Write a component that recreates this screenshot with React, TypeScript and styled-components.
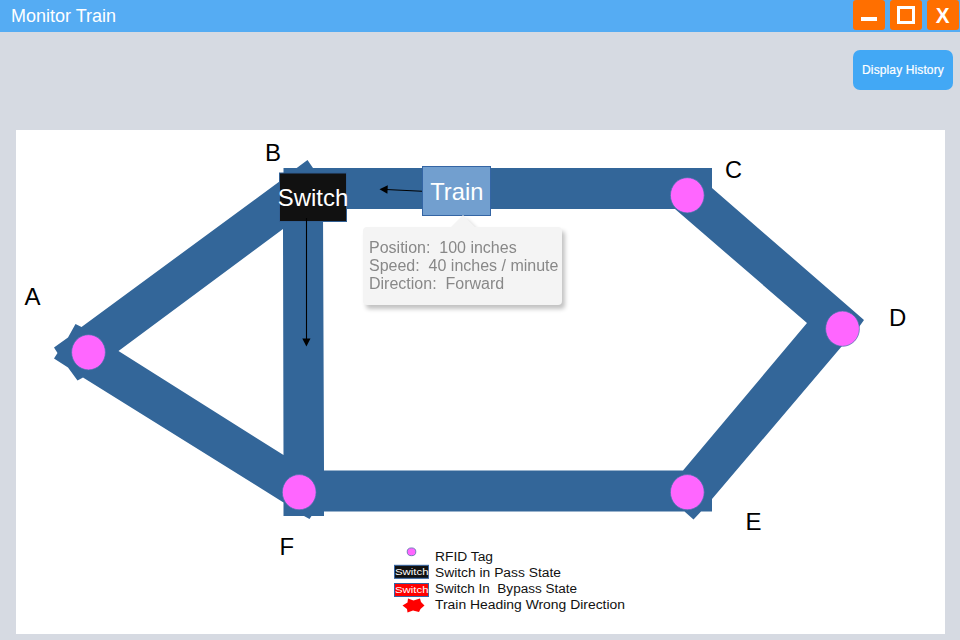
import React from "react";
import styled, { createGlobalStyle } from "styled-components";

const GlobalStyle = createGlobalStyle`
  * { box-sizing: border-box; }
  body { margin: 0; background: #d6dae2; font-family: "Liberation Sans", Arial, sans-serif; }
`;

const Window = styled.div`
  width: 960px;
  height: 640px;
  overflow: hidden;
  display: flex;
  flex-direction: column;
  background: #d6dae2;
`;

const TitleBar = styled.header`
  height: 32px;
  flex: none;
  display: flex;
  justify-content: space-between;
  background: #55acf3;
  padding: 0 1px 0 11px;
`;

const Title = styled.h1`
  margin: 0;
  font-size: 18px;
  font-weight: 400;
  line-height: 32px;
  color: #fff;
`;

const Controls = styled.div`
  display: flex;
  gap: 5px;
`;

const ControlButton = styled.button`
  width: 32px;
  height: 30px;
  padding: 0;
  border: 0;
  border-radius: 3px;
  background: #ff6f00;
  svg { display: block; }
`;

const Toolbar = styled.div`
  height: 98px;
  flex: none;
  display: flex;
  justify-content: flex-end;
  align-items: flex-start;
  padding: 18px 7px 0 0;
`;

const HistoryButton = styled.button`
  width: 100px;
  height: 40px;
  padding: 0;
  border: 0;
  border-radius: 7px;
  background: #42a8f5;
  color: #fff;
  font: 12px "Liberation Sans", Arial, sans-serif;
  letter-spacing: 0.12px;
  -webkit-text-stroke: 0.2px #fff;
  white-space: nowrap;
`;

const Panel = styled.main`
  position: relative;
  width: 929px;
  height: 504px;
  margin-left: 16px;
  background: #fff;
`;

const Track = styled.svg`
  display: block;
  font-family: "Liberation Sans", Arial, sans-serif;
`;

const Tooltip = styled.div`
  position: absolute;
  left: 347px;
  top: 97px;
  width: 199px;
  height: 78px;
  padding: 12px 6px;
  border-radius: 4px;
  background: #f4f4f4;
  filter: drop-shadow(3px 4px 2px rgba(0, 0, 0, 0.24));
  color: #888;
  font-size: 16px;
  line-height: 18px;
  white-space: pre;

  &::before {
    content: "";
    position: absolute;
    left: 88px;
    top: -12px;
    border: solid transparent;
    border-width: 0 12px 12px;
    border-bottom-color: #f4f4f4;
  }
`;

const nodes = [
  { label: "A", lx: 24.5, ly: 304.5, width: 16, x: 88.5, y: 352.3 },
  { label: "B", lx: 265, ly: 160.5, width: 16 },
  { label: "C", lx: 725, ly: 177.5, width: 17, x: 687.3, y: 195.3 },
  { label: "D", lx: 889, ly: 325.5, width: 17.3, x: 842.5, y: 328.7 },
  { label: "E", lx: 745.5, ly: 530, width: 16, x: 687.3, y: 492.2 },
  { label: "F", lx: 279.5, ly: 554.5, width: 14.6, x: 299.2, y: 492.2 },
];

const legend = [
  { text: "RFID Tag", y: 560.7, width: 58 },
  { text: "Switch in Pass State", y: 577.2, width: 126 },
  { text: "Switch In  Bypass State", y: 592.5, width: 142 },
  { text: "Train Heading Wrong Direction", y: 608.6, width: 190 },
];

export default function App() {
  return (
    <Window>
      <GlobalStyle />
      <TitleBar>
        <Title>Monitor Train</Title>
        <Controls>
          <ControlButton aria-label="Minimize">
            <svg width="32" height="30"><path d="M8 17h16v4H8z" fill="#fff" /></svg>
          </ControlButton>
          <ControlButton aria-label="Maximize">
            <svg width="32" height="30"><rect x="8.5" y="7.5" width="15" height="15" fill="none" stroke="#fff" strokeWidth="3" /></svg>
          </ControlButton>
          <ControlButton aria-label="Close">
            <svg width="32" height="30">
              <text x="8.8" y="23" fill="#fff" fontSize="22" fontWeight="700" fontFamily="Liberation Sans, Arial, sans-serif" textLength="13.8" lengthAdjust="spacingAndGlyphs">X</text>
            </svg>
          </ControlButton>
        </Controls>
      </TitleBar>
      <Toolbar>
        <HistoryButton>Display History</HistoryButton>
      </Toolbar>
      <Panel>
        <Track width="929" height="504" viewBox="16 130 929 504">
          <path
            fill="#336699"
            fillRule="evenodd"
            d="M54 347.5L68 337.5L75.5 324L81.5 327L283.5 178.5V168H296.7L307.5 160L313 168H712V188L864 320L859 327L842 346L712 499V511.5H701L693.5 519.5L684.5 511.5H324V516H311.5L309.5 519L304 516H283.5V502.5L83 377.5L77.5 380.5L68 367.5L54 358.5L57.5 353Z
               M118.5 351L283.5 455L283 229Z
               M323 209L324 470.5H683L807 323L675 209Z"
          />
          {nodes.map((n) => (
            <React.Fragment key={n.label}>
              {n.x !== undefined && (
                <ellipse cx={n.x} cy={n.y} rx="16.9" ry="17.6" fill="#ff66ff" stroke="#4274a8" strokeWidth="0.7" />
              )}
              <text x={n.lx} y={n.ly} fontSize="24" textLength={n.width} lengthAdjust="spacingAndGlyphs">{n.label}</text>
            </React.Fragment>
          ))}

          <rect x="279.5" y="173" width="67" height="48.5" fill="#111" stroke="#315f93" />
          <text x="277.8" y="206" fontSize="24" fill="#fff" textLength="70.5" lengthAdjust="spacingAndGlyphs">Switch</text>
          <path d="M306.5 218V339" stroke="#000" strokeWidth="1.1" />
          <path d="M302.3 338.5H310.5L306.4 346.5Z" />

          <rect x="422.5" y="166.5" width="68" height="49" fill="#729fcf" stroke="#3465a4" />
          <text x="430.3" y="200" fontSize="24" fill="#fff" textLength="53" lengthAdjust="spacingAndGlyphs">Train</text>
          <path d="M422 191.2L386 189.5" stroke="#000" strokeWidth="1.1" />
          <path d="M379.5 189.2L387.8 185.2L387.4 193.7Z" />

          <ellipse cx="411.5" cy="551.8" rx="4.3" ry="3.9" fill="#ff66ff" stroke="#5070a8" strokeWidth="0.8" />
          <rect x="394.5" y="565.3" width="34" height="13" fill="#111" stroke="#3465a4" />
          <rect x="394.5" y="583.5" width="34" height="13" fill="#f00" stroke="#3465a4" />
          <text x="395" y="575" fontSize="9.5" fill="#fff" textLength="33.5" lengthAdjust="spacingAndGlyphs">Switch</text>
          <text x="395" y="593" fontSize="9.5" fill="#fff" textLength="33.5" lengthAdjust="spacingAndGlyphs">Switch</text>
          <path fill="#f00" d="M408 598.5L413.5 600.5L420 598.5L421 602L424.5 605.5L420.5 609L419 612L413 610.5L407.5 612.5L407 609L402.5 605.5L407.5 602.5Z" />
          {legend.map((item) => (
            <text key={item.text} x="435" y={item.y} fontSize="12" fill="#111" xmlSpace="preserve" textLength={item.width} lengthAdjust="spacingAndGlyphs">{item.text}</text>
          ))}
        </Track>
        <Tooltip>{"Position:  100 inches\nSpeed:  40 inches / minute\nDirection:  Forward"}</Tooltip>
      </Panel>
    </Window>
  );
}
